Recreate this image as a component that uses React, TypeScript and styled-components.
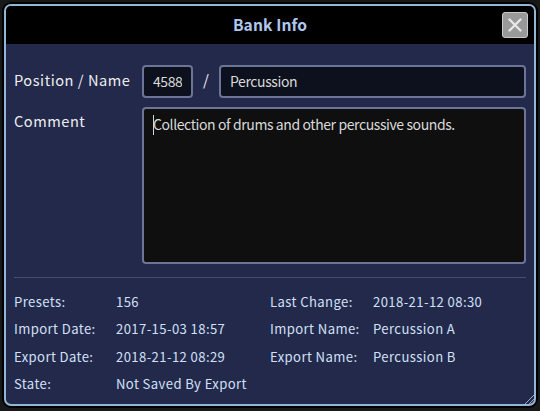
import React from "react";
import styled, { createGlobalStyle } from "styled-components";

const GlobalStyle = createGlobalStyle`
  * { box-sizing: border-box; }
  html, body, #root { height: 100%; }
  body {
    margin: 0;
    padding: 4px 4px 5px;
    overflow: hidden;
    background: #181818;
    font-family: "Noto Sans CJK SC", "Noto Sans", sans-serif;
  }
`;

const Dialog = styled.section`
  position: relative;
  width: 532px;
  height: 402px;
  display: flex;
  flex-direction: column;
  border: 2px solid #92b6d5;
  border-radius: 7px;
  background: #22294b;
  box-shadow: 0 0 0 2px #000;
  overflow: hidden;
`;

const TitleBar = styled.header`
  flex: none;
  height: 38px;
  display: grid;
  grid-template-columns: 32px 1fr 32px;
  align-items: center;
  background: #000;
`;

const Title = styled.h1`
  grid-column: 2;
  margin: 0;
  padding-bottom: 2px;
  text-align: center;
  font-size: 15.6px;
  line-height: 36px;
  font-weight: 700;
  letter-spacing: 0.1px;
  color: #b0c8f0;
`;

const CloseButton = styled.button`
  width: 26px;
  height: 26px;
  padding: 0;
  display: flex;
  align-items: center;
  justify-content: center;
  border: 1px solid #c9c9c9;
  border-radius: 3px;
  background: #999;
`;

const Form = styled.div`
  flex: none;
  margin: 21px 8px 0;
  display: grid;
  grid-template-columns: 128px 384px;
  row-gap: 9px;
  padding-bottom: 13px;
  border-bottom: 1px solid #464d6d;
`;

const Label = styled.label<{ $lineHeight: number }>`
  font-size: 14.6px;
  line-height: ${(p) => p.$lineHeight}px;
  letter-spacing: 0.53px;
  color: #eee;
  white-space: nowrap;
`;

const Fields = styled.div`
  display: grid;
  grid-template-columns: 51px 26px 307px;
`;

const Slash = styled.span`
  text-align: center;
  font-size: 15px;
  line-height: 30px;
  color: #eee;
`;

const Input = styled.input`
  width: 100%;
  height: 33px;
  padding: 0 9px 2px;
  border: 2px solid #6c7597;
  border-radius: 4px;
  outline: none;
  background: #0d111d;
  color: #dadada;
  font: 14px "Noto Sans CJK SC", sans-serif;
  letter-spacing: -0.4px;
`;

const CommentBox = styled.div`
  height: 157px;
  padding: 6px 9px;
  border: 2px solid #6c7597;
  border-radius: 4px;
  background: #0f0f0f;
  color: #dadada;
  font-size: 14px;
  line-height: 19px;
  letter-spacing: -0.4px;
  white-space: nowrap;
`;

const Caret = styled.span`
  display: inline-block;
  width: 1px;
  height: 20px;
  margin-right: -1px;
  vertical-align: top;
  background: #d6d6d6;
`;

const Details = styled.dl`
  margin: 10px 8px 0;
  display: grid;
  grid-template-columns: 102px 154px 103px 153px;
  grid-template-rows: 27px 28px 27px 27px;
  align-items: start;
  font-size: 13.1px;
  line-height: 27px;
  letter-spacing: 0.4px;
  color: #d2e0f7;
  white-space: nowrap;
`;

const Term = styled.dt`
  margin: 0;
`;

const Value = styled.dd<{ $wide?: boolean }>`
  margin: 0;
  grid-column: ${(p) => (p.$wide ? "span 3" : "auto")};
`;

const ResizeGrip = styled.svg`
  position: absolute;
  right: 0;
  bottom: 0;
`;

const details = [
  ["Presets:", "156"],
  ["Last Change:", "2018-21-12 08:30"],
  ["Import Date:", "2017-15-03 18:57"],
  ["Import Name:", "Percussion A"],
  ["Export Date:", "2018-21-12 08:29"],
  ["Export Name:", "Percussion B"],
  ["State:", "Not Saved By Export"],
];

export default function App() {
  return (
    <>
      <GlobalStyle />
      <Dialog>
        <TitleBar>
          <Title>Bank Info</Title>
          <CloseButton aria-label="Close">
            <svg width="14" height="14" viewBox="0 0 14 14" stroke="#e8e8e8" strokeWidth="2.4" strokeLinecap="round">
              <path d="M1.5 1.5 12.5 12.5M12.5 1.5 1.5 12.5" />
            </svg>
          </CloseButton>
        </TitleBar>
        <Form>
          <Label $lineHeight={30}>Position / Name</Label>
          <Fields>
            <Input defaultValue="4588" />
            <Slash>/</Slash>
            <Input defaultValue="Percussion" />
          </Fields>
          <Label $lineHeight={28}>Comment</Label>
          <CommentBox>
            <Caret />
            Collection of drums and other percussive sounds.
          </CommentBox>
        </Form>
        <Details>
          {details.map(([term, value]) => (
            <React.Fragment key={term}>
              <Term>{term}</Term>
              <Value $wide={term === "State:"}>{value}</Value>
            </React.Fragment>
          ))}
        </Details>
        <ResizeGrip width="9" height="9" viewBox="0 0 9 9" stroke="#b4b8c8" strokeWidth="0.9">
          <path d="M0 9 9 0M4 9 9 4" />
        </ResizeGrip>
      </Dialog>
    </>
  );
}
